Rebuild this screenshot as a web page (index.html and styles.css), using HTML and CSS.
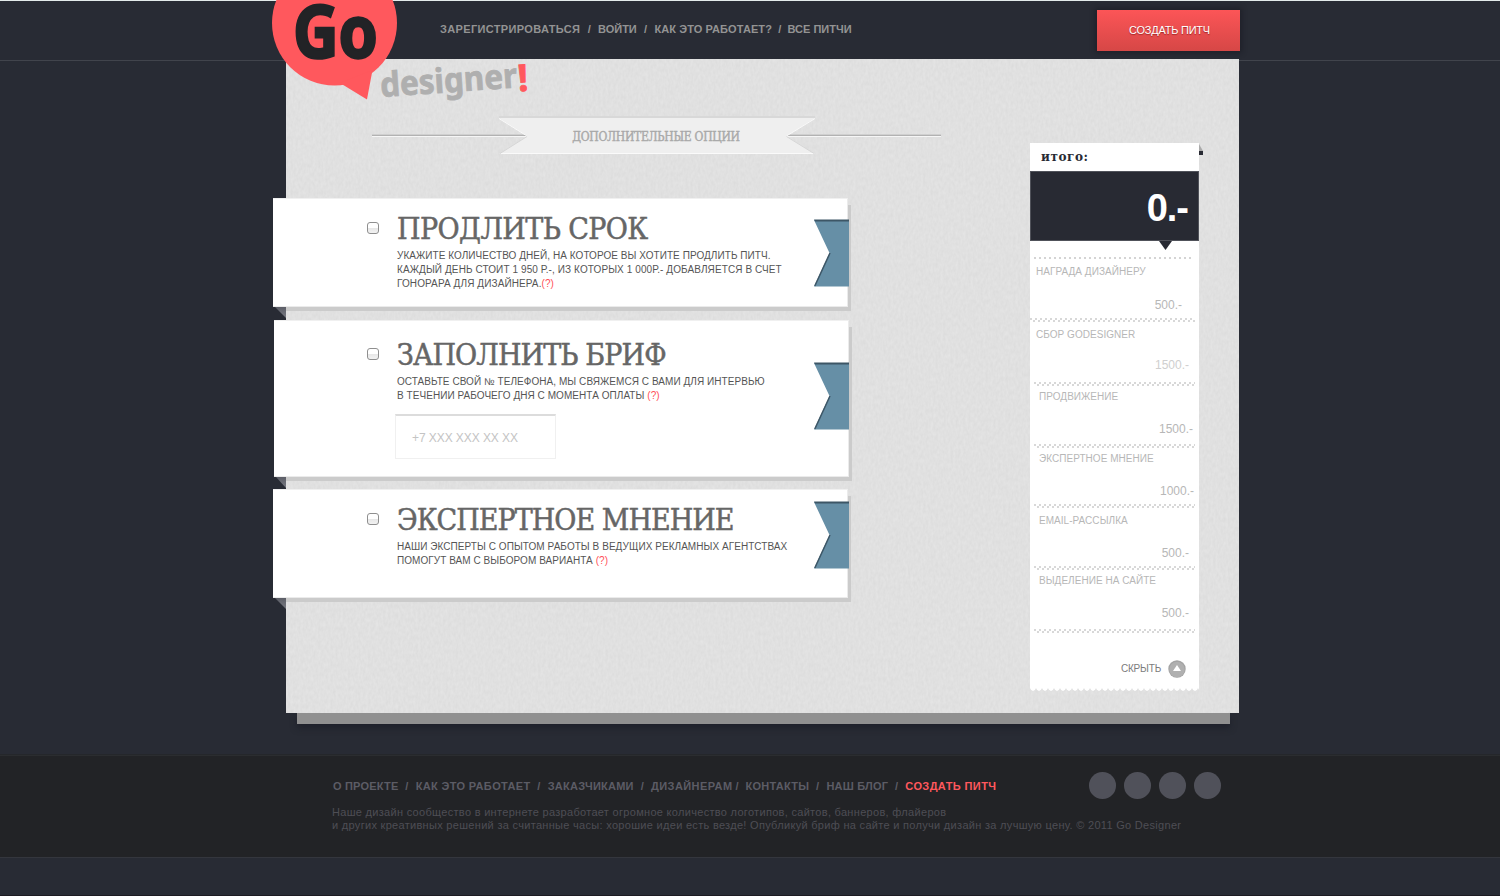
FILE: index.html
```html
<!DOCTYPE html>
<html lang="ru">
<head>
<meta charset="utf-8">
<title>Go Designer</title>
<link rel="stylesheet" href="styles.css">
</head>
<body>
<header class="header">
  <nav class="nav">
    <a class="wide">ЗАРЕГИСТРИРОВАТЬСЯ</a><i>/</i><a>ВОЙТИ</a><i>/</i><a class="mid">КАК ЭТО РАБОТАЕТ?</a><i class="short">/</i><a>ВСЕ ПИТЧИ</a>
  </nav>
  <a class="create">СОЗДАТЬ ПИТЧ</a>
  <svg class="logo" width="270" height="106" viewBox="0 0 270 106">
    <circle cx="74.500" cy="23" r="62.500" fill="#ff585d"/>
    <path fill="#ff585d" d="M80 83L107 99.500L112.500 70Z"/>
    <text class="logo-go" x="33" y="57.500" textLength="85" lengthAdjust="spacingAndGlyphs">Go</text>
    <g transform="rotate(-4 120 97)">
      <text class="logo-name" x="121" y="97" textLength="137" lengthAdjust="spacingAndGlyphs">designer</text>
      <text class="logo-mark" x="258.500" y="101">!</text>
    </g>
  </svg>
</header>

<main class="panel">
  <svg class="grain" width="953" height="654">
    <filter id="grain" x="0" y="0" width="100%" height="100%" color-interpolation-filters="sRGB">
      <feTurbulence type="fractalNoise" baseFrequency="0.4 0.22" numOctaves="2" seed="4"/>
      <feColorMatrix type="matrix" values="0.045 0 0 0 0.857  0.045 0 0 0 0.857  0.045 0 0 0 0.857  0 0 0 0 1"/>
    </filter>
    <rect width="953" height="654" filter="url(#grain)"/>
  </svg>

  <div class="content">
    <div class="heading">
      <span class="rule"></span>
      <div class="banner">
        <svg width="320" height="40" viewBox="0 0 320 40">
          <path d="M1 1H317" stroke="#d8d8d8" stroke-width="2"/>
          <path fill="#efefef" d="M1 2H317L288.500 20L317 38H1L29.500 20Z"/>
          <path fill="none" stroke="#fafafa" d="M1 2.500L29 20M317 2.500L288.500 20M3 37.500H316"/>
          <path fill="none" stroke="#d6d6d6" d="M29 20.500L2 37.500M288.500 20.500L316 37.500"/>
        </svg>
        <h2>ДОПОЛНИТЕЛЬНЫЕ ОПЦИИ</h2>
      </div>
      <span class="rule"></span>
    </div>

    <section class="card first">
      <span class="check"></span>
      <div class="text">
        <h3 class="t1">ПРОДЛИТЬ СРОК</h3>
        <p>УКАЖИТЕ КОЛИЧЕСТВО ДНЕЙ, НА КОТОРОЕ ВЫ ХОТИТЕ ПРОДЛИТЬ ПИТЧ.<br><span class="loose">КАЖДЫЙ ДЕНЬ СТОИТ 1 950 Р.-, ИЗ КОТОРЫХ 1 000Р.- ДОБАВЛЯЕТСЯ В СЧЕТ<br>ГОНОРАРА ДЛЯ ДИЗАЙНЕРА.<a>(?)</a></span></p>
      </div>
      <svg class="ribbon" width="35" height="68" viewBox="0 0 35 68"><path fill="#668fa6" d="M0 1H35V67.500H0L15.500 34Z"/><path fill="#3d5666" d="M0 .5H35V2.500H1Z"/><path fill="none" stroke="#3d5666" stroke-width="1.500" d="M.8 67L16 34"/></svg>
    </section>

    <section class="card second">
      <span class="check"></span>
      <div class="text">
        <h3 class="t2">ЗАПОЛНИТЬ БРИФ</h3>
        <p>ОСТАВЬТЕ СВОЙ № ТЕЛЕФОНА, МЫ СВЯЖЕМСЯ С ВАМИ ДЛЯ ИНТЕРВЬЮ<br>В ТЕЧЕНИИ РАБОЧЕГО ДНЯ С МОМЕНТА ОПЛАТЫ <a>(?)</a></p>
        <div class="phone">+7 XXX XXX XX XX</div>
      </div>
      <svg class="ribbon" width="35" height="68" viewBox="0 0 35 68"><path fill="#668fa6" d="M0 1H35V67.500H0L15.500 34Z"/><path fill="#3d5666" d="M0 .5H35V2.500H1Z"/><path fill="none" stroke="#3d5666" stroke-width="1.500" d="M.8 67L16 34"/></svg>
    </section>

    <section class="card third">
      <span class="check"></span>
      <div class="text">
        <h3 class="t3">ЭКСПЕРТНОЕ МНЕНИЕ</h3>
        <p>НАШИ ЭКСПЕРТЫ С ОПЫТОМ РАБОТЫ В ВЕДУЩИХ РЕКЛАМНЫХ АГЕНТСТВАХ<br>ПОМОГУТ ВАМ С ВЫБОРОМ ВАРИАНТА <a>(?)</a></p>
      </div>
      <svg class="ribbon" width="35" height="68" viewBox="0 0 35 68"><path fill="#668fa6" d="M0 1H35V67.500H0L15.500 34Z"/><path fill="#3d5666" d="M0 .5H35V2.500H1Z"/><path fill="none" stroke="#3d5666" stroke-width="1.500" d="M.8 67L16 34"/></svg>
    </section>
  </div>

  <aside class="total">
    <svg class="fold" width="5" height="12" viewBox="0 0 5 12"><path fill="#aaa" d="M0 0L4 7H0Z"/><path fill="#282a33" d="M0 7H4V11H0Z"/></svg>
    <h4>итого:</h4>
    <div class="sum"><b>0.-</b>
      <svg class="arrow" width="13" height="9" viewBox="0 0 13 9"><path fill="#282a33" d="M0 0H13L6.500 9Z"/></svg>
    </div>
    <div class="dots single"></div>
    <div class="row r1"><span>НАГРАДА ДИЗАЙНЕРУ</span><em>500.-</em></div>
    <div class="dots full"></div>
    <div class="row r2"><span>СБОР GODESIGNER</span><em>1500.-</em></div>
    <div class="dots"></div>
    <div class="row r3"><span>ПРОДВИЖЕНИЕ</span><em>1500.-</em></div>
    <div class="dots"></div>
    <div class="row r4"><span>ЭКСПЕРТНОЕ МНЕНИЕ</span><em>1000.-</em></div>
    <div class="dots"></div>
    <div class="row r5"><span>EMAIL-РАССЫЛКА</span><em>500.-</em></div>
    <div class="dots"></div>
    <div class="row r6"><span>ВЫДЕЛЕНИЕ НА САЙТЕ</span><em>500.-</em></div>
    <div class="dots"></div>
    <div class="hide"><span>СКРЫТЬ</span>
      <svg width="18" height="18" viewBox="0 0 18 18"><circle cx="9" cy="9" r="8.700" fill="#a3a3a3"/><circle cx="9" cy="9.500" r="7.700" fill="#b0b0b0"/><path fill="#fff" d="M9 5L13 11H5Z"/></svg>
    </div>
    <div class="scallop"></div>
  </aside>
</main>
<div class="under"></div>

<footer class="footer">
  <div class="foot-text">
    <nav class="foot-nav">
      <a class="f1">О ПРОЕКТЕ</a><i>/</i><a class="f2">КАК ЭТО РАБОТАЕТ</a><i>/</i><a class="f3">ЗАКАЗЧИКАМИ</a><i>/</i><a>ДИЗАЙНЕРАМ</a><i class="short">/</i><a class="f3">КОНТАКТЫ</a><i>/</i><a class="f1">НАШ БЛОГ</a><i>/</i><a class="hot">СОЗДАТЬ ПИТЧ</a>
    </nav>
    <p>Наше дизайн сообщество в интернете разработает огромное количество логотипов, сайтов, баннеров, флайеров<br>и других креативных решений за считанные часы: хорошие идеи есть везде! Опубликуй бриф на сайте и получи дизайн за лучшую цену. © 2011 Go Designer</p>
  </div>
  <div class="social"><span></span><span></span><span></span><span></span></div>
</footer>
<div class="bottom"></div>
</body>
</html>
```
FILE: styles.css
```css
* { box-sizing: border-box; }
body {
  margin: 0;
  width: 1500px;
  height: 896px;
  overflow: hidden;
  background: #282b34;
  font-family: "Liberation Sans", Arial, sans-serif;
}
h2, h3, h4, p { margin: 0; font-weight: 400; }
i, em { font-style: normal; }

/* header */
.header {
  position: relative;
  z-index: 2;
  display: flex;
  height: 61px;
  margin-bottom: -2px;
  padding-left: 440px;
  border-top: 1px solid #e4ebeb;
}
.header::after {
  content: "";
  position: absolute;
  z-index: -1;
  left: 0;
  right: 0;
  bottom: 0;
  height: 1px;
  background: linear-gradient(90deg, #41444c 286px, transparent 286px, transparent 1239px, #41444c 1239px);
}
.nav, .foot-nav {
  display: flex;
  font: 700 11px/14px "Liberation Sans", Arial, sans-serif;
}
.nav { width: 657px; padding-top: 21px; color: #939393; white-space: nowrap; }
.nav i { width: 17.700px; text-align: center; }
.nav i.short { width: 15.500px; }
.nav .wide { letter-spacing: .35px; }
.nav .mid { letter-spacing: .1px; }
.create {
  width: 143px;
  height: 41px;
  margin-top: 9px;
  padding-left: 2px;
  text-align: center;
  color: #fff;
  font-size: 11px;
  line-height: 41px;
  letter-spacing: -.24px;
  text-shadow: 0 1px 1px rgba(90,0,0,.5);
  background: linear-gradient(#fc5557, #d64746);
  box-shadow: 0 0 5px 2px rgba(20,20,28,.45);
}
.logo { position: absolute; left: 260px; top: -1px; }
.logo-go { font: 700 73px "Noto Sans", sans-serif; fill: #222326; stroke: #222326; stroke-width: 2.500; }
.logo-name { font: 700 34px "Noto Sans", sans-serif; fill: #afafaf; stroke: #afafaf; stroke-width: .8; }
.logo-mark { font: 700 37px "Noto Sans", sans-serif; fill: #ff585d; stroke: #ff585d; stroke-width: .8; }

/* panel */
.panel {
  position: relative;
  z-index: 1;
  display: flex;
  justify-content: space-between;
  width: 953px;
  height: 654px;
  margin-left: 286px;
  background: #e0e0e0;
}
.grain { position: absolute; left: 0; top: 0; }
.under {
  height: 11px;
  width: 933px;
  margin-left: 297px;
  background: #909090;
  box-shadow: 0 4px 6px rgba(25,26,36,.6);
}
.content { position: relative; width: 660px; padding-top: 57px; }
.heading { display: flex; align-items: flex-start; margin-left: 86px; width: 569px; height: 82px; }
.rule { flex: 1; height: 3px; margin-top: 18px; border-top: 1px solid #cfcfcf; border-bottom: 1px solid #f6f6f6; background: #b2b2b2; }
.banner { position: relative; width: 260px; height: 40px; }
.banner svg { position: absolute; left: -29px; top: 0; }
.banner h2 {
  position: relative;
  text-align: center;
  font: 400 12px/14px "DejaVu Serif Condensed", "DejaVu Serif", serif;
  letter-spacing: -.28px;
  padding: 14px 1px 0 0;
  color: #a9a9a9;
  -webkit-text-stroke: .4px #a9a9a9;
}

/* option cards */
.card {
  position: relative;
  display: flex;
  width: 575px;
  margin-left: -13px;
  padding-left: 94px;
  background: #fff;
  border: solid #ebebeb;
  border-width: 1px 1px 1px 0;
  border-top-color: #f0f0f0;
}
.card::before {
  content: "";
  position: absolute;
  left: 13px;
  right: -4px;
  bottom: -5px;
  height: 4px;
  background: #cbcbcb;
}
.card::after {
  content: "";
  position: absolute;
  left: 0;
  top: 100%;
  width: 13px;
  height: 12px;
  background: linear-gradient(#595b64, #787a82);
  clip-path: polygon(2px 1px, 100% 1px, 100% 100%);
}
.text::after {
  content: "";
  position: absolute;
  top: 6px;
  right: -4px;
  bottom: -4px;
  width: 3px;
  background: #cbcbcb;
}
.first { height: 109px; padding-top: 12px; }
.second { height: 157px; margin: 13px 0 0 -12px; padding: 12px 0 0 93px; }
.second::before { left: 12px; }
.second::after { width: 12px; }
.second .check { margin-top: 15px; }
.third { height: 109px; margin-top: 12px; padding-top: 12px; }
.second .text { margin-top: 4px; }
.check {
  width: 12px;
  height: 12px;
  margin: 11px 18px 0 0;
  border: 1px solid #8f8f8f;
  border-radius: 3px;
  background: linear-gradient(#fff 45%, #e6e6e6 46%, #f2f2f2);
}
.text h3 {
  height: 38px;
  font: 400 30px/36px "DejaVu Serif Condensed", "DejaVu Serif", serif;
  color: #666;
  -webkit-text-stroke: .5px #666;
  white-space: nowrap;
}
.text .t1 { letter-spacing: -.6px; }
.text .t2 { letter-spacing: -.9px; }
.text .t3 { letter-spacing: -.98px; }
.text p { font-size: 10px; line-height: 14px; letter-spacing: .055px; color: #555; white-space: nowrap; }
.text .loose { letter-spacing: .097px; }
.text p a { color: #ff4f57; }
.phone {
  width: 161px;
  height: 45px;
  margin: 11px 0 0 -2px;
  padding: 15px 0 0 16px;
  font-size: 12px;
  line-height: 15px;
  letter-spacing: -.07px;
  color: #c4c4c4;
  border: 1px solid #f0f0f0;
  border-top: 2px solid #dcdcdc;
}
.ribbon { position: absolute; top: 20px; right: -2px; }
.second .ribbon { top: 41px; right: -1px; }
.third .ribbon { top: 11px; }

/* totals receipt */
.total {
  position: relative;
  width: 169px;
  height: 548px;
  margin: 84px 40px 0 0;
  display: flex;
  flex-direction: column;
  background: linear-gradient(#fff, #fff) 0 0 / 100% 545px no-repeat;
}
.total > * { flex-shrink: 0; }
.fold { position: absolute; left: 169px; top: 1px; }
.total h4 {
  height: 28px;
  padding-left: 11px;
  font: 700 12px/28px "DejaVu Serif", serif;
  letter-spacing: .57px;
  color: #282a33;
}
.sum {
  position: relative;
  height: 70px;
  padding-right: 11px;
  text-align: right;
  background: #282a33;
  box-shadow: inset 0 0 0 1px #50525a;
  color: #fff;
}
.sum b { font: 700 38px/75px "Liberation Sans", Arial, sans-serif; letter-spacing: -1px; }
.arrow { position: absolute; left: 129px; top: 70px; }
.dots {
  height: 5px;
  margin: 0 4px -1px;
  background:
    repeating-linear-gradient(90deg, #d8d8d8 0 2px, transparent 2px 5px) 0 0 / 100% 2px no-repeat,
    repeating-linear-gradient(90deg, transparent 0 3px, #d8d8d8 3px 5px) 0 2px / 100% 2px no-repeat;
}
.dots.full { margin-left: 0; }
.dots.single {
  height: 2px;
  margin: 16px 6px 0 4px;
  background: repeating-linear-gradient(90deg, #d4d4d4 0 2px, transparent 2px 5px);
}
.row { display: flex; flex-direction: column; justify-content: space-between; color: #b7b7b7; }
.row span { padding-left: 9px; font-size: 10px; line-height: 12px; letter-spacing: .04px; }
.row em { text-align: right; font-size: 12px; line-height: 14px; }
.r1 { height: 59px; padding: 7px 17px 6px 0; }
.r2 { height: 60px; padding: 7px 10px 10px 0; }
.r1 span, .r2 span { padding-left: 6px; }
.r2 em { color: #cfcfcf; }
.r3 { height: 58px; padding: 5px 6px 8px 0; }
.r4 { height: 56px; padding: 5px 5px 6px 0; }
.r5 { height: 58px; padding: 7px 10px 6px 0; }
.r6 { height: 59px; padding: 5px 10px 9px 0; }
.hide {
  display: flex;
  align-items: center;
  justify-content: flex-end;
  gap: 7px;
  height: 55px;
  padding: 16px 13px 0 0;
  font-size: 10px;
  letter-spacing: -.2px;
  color: #7c7c7c;
}
.scallop {
  height: 3px;
  margin-top: auto;
  background: radial-gradient(ellipse 3px 3px at 50% 0, #fff 80%, transparent) 0 0 / 6px 3px;
}

/* footer */
.footer {
  display: flex;
  height: 103px;
  margin-top: 31px;
  padding-left: 332px;
  background: #222326;
  border-top: 1px solid #2b2d30;
  border-bottom: 1px solid #34363d;
  box-shadow: 0 -1px #25272b;
}
.foot-text { width: 757px; padding-top: 23px; }
.foot-nav { padding-left: 1px; color: #5c5c65; letter-spacing: .43px; white-space: nowrap; }
.foot-nav i { width: 17.200px; text-align: center; }
.foot-nav i.short { width: 13px; text-align: left; padding-left: 3px; }
.foot-nav .f1 { letter-spacing: .2px; }
.foot-nav .f2 { letter-spacing: .36px; }
.foot-nav .f3 { letter-spacing: .25px; }
.foot-nav .hot { color: #ff585d; letter-spacing: .4px; }
.foot-text p { padding-top: 13px; font-size: 11px; line-height: 13px; letter-spacing: .303px; color: #4e4e55; white-space: nowrap; }
.social { display: flex; gap: 8.500px; padding-top: 16px; }
.social span { width: 26.500px; height: 26.500px; border-radius: 50%; background: #50515a; }
.bottom { height: 38px; border-bottom: 1px solid #1d1b22; background: #282b34; }
```
